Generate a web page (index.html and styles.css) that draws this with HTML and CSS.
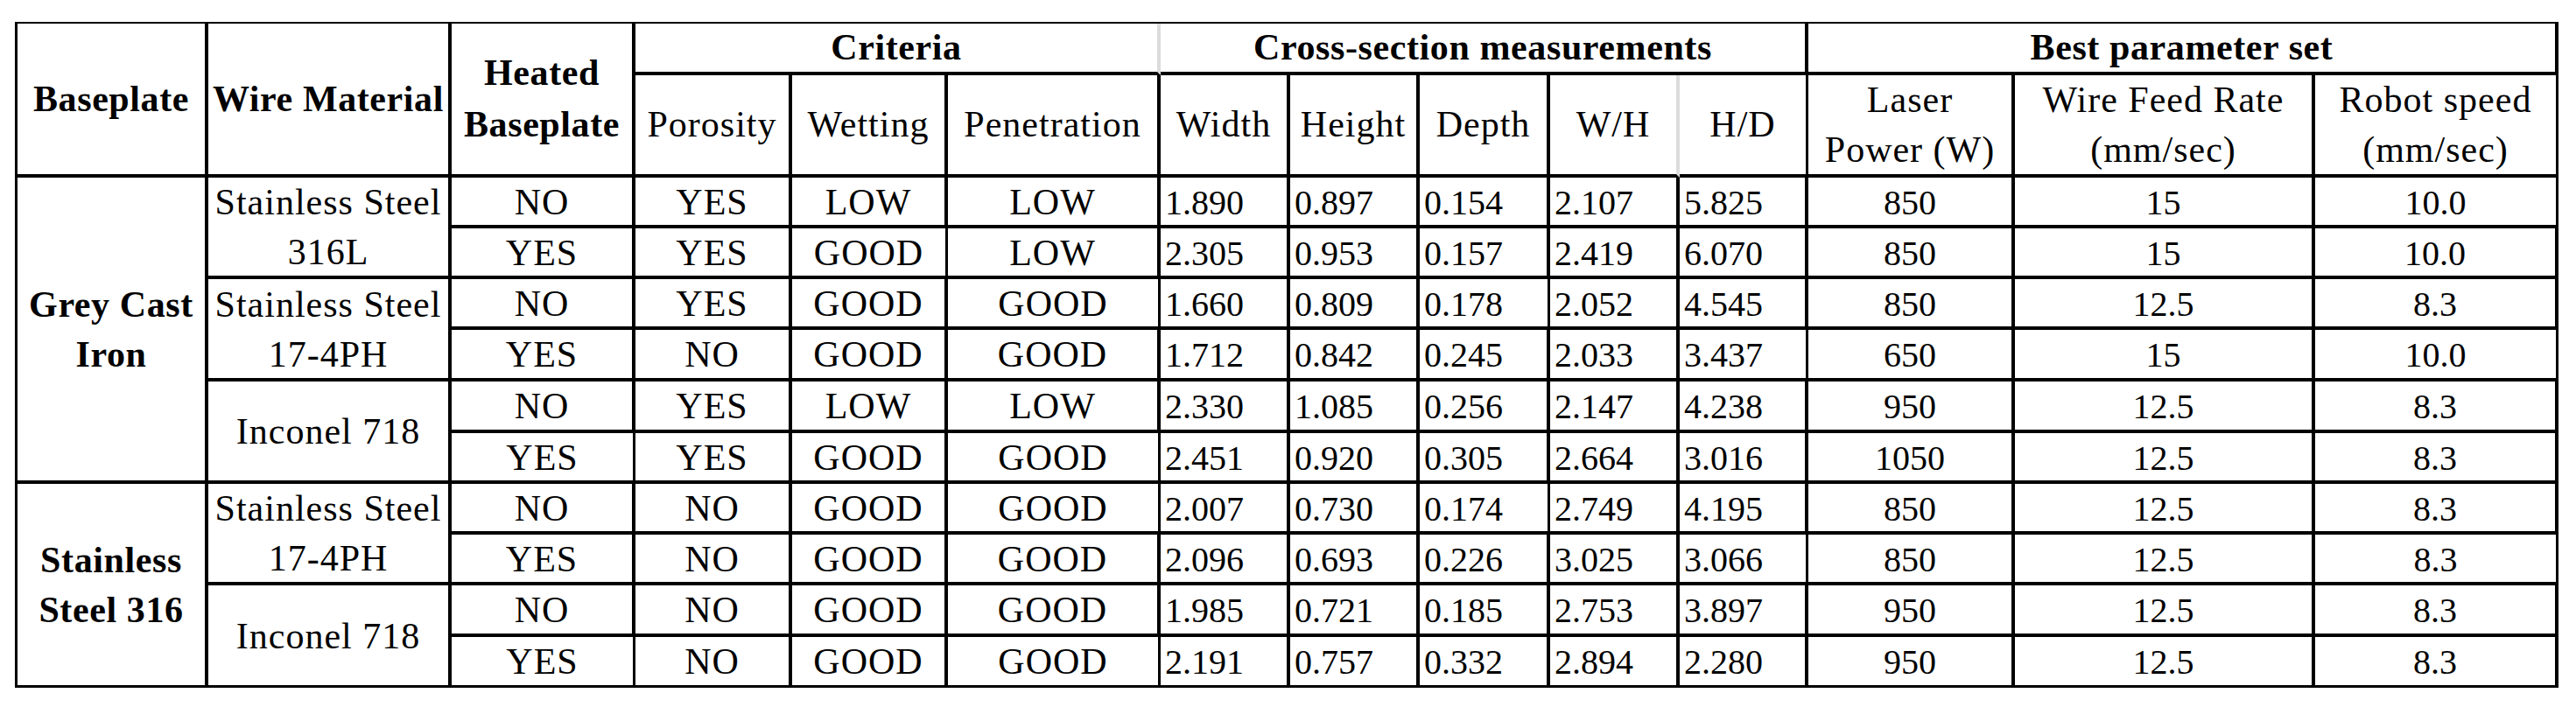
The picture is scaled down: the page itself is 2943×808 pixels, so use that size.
FILE: index.html
```html
<!DOCTYPE html>
<html lang="en">
<head>
<meta charset="utf-8">
<title>Best parameter set</title>
<link rel="stylesheet" href="styles.css">
</head>
<body>
<div class="table">
  <div class="c h b rs2">Baseplate</div>
  <div class="c h b rs2">Wire Material</div>
  <div class="c h b rs2 two">Heated<br>Baseplate</div>
  <div class="c h b cs3 faint">Criteria</div>
  <div class="c h b cs5">Cross-section measurements</div>
  <div class="c h b cs3">Best parameter set</div>
  <div class="c h">Porosity</div>
  <div class="c h">Wetting</div>
  <div class="c h">Penetration</div>
  <div class="c h">Width</div>
  <div class="c h">Height</div>
  <div class="c h">Depth</div>
  <div class="c h faint">W/H</div>
  <div class="c h">H/D</div>
  <div class="c h">Laser<br>Power (W)</div>
  <div class="c h">Wire Feed Rate<br>(mm/sec)</div>
  <div class="c h">Robot speed<br>(mm/sec)</div>

  <div class="c b rs6">Grey Cast<br>Iron</div>
  <div class="c rs2">Stainless Steel<br>316L</div>
  <div class="c">NO</div><div class="c">YES</div><div class="c">LOW</div><div class="c">LOW</div>
  <div class="c num">1.890</div><div class="c num">0.897</div><div class="c num">0.154</div><div class="c num">2.107</div><div class="c num">5.825</div>
  <div class="c nc">850</div><div class="c nc">15</div><div class="c nc">10.0</div>

  <div class="c">YES</div><div class="c">YES</div><div class="c">GOOD</div><div class="c">LOW</div>
  <div class="c num">2.305</div><div class="c num">0.953</div><div class="c num">0.157</div><div class="c num">2.419</div><div class="c num">6.070</div>
  <div class="c nc">850</div><div class="c nc">15</div><div class="c nc">10.0</div>

  <div class="c rs2">Stainless Steel<br>17-4PH</div>
  <div class="c">NO</div><div class="c">YES</div><div class="c">GOOD</div><div class="c">GOOD</div>
  <div class="c num">1.660</div><div class="c num">0.809</div><div class="c num">0.178</div><div class="c num">2.052</div><div class="c num">4.545</div>
  <div class="c nc">850</div><div class="c nc">12.5</div><div class="c nc">8.3</div>

  <div class="c">YES</div><div class="c">NO</div><div class="c">GOOD</div><div class="c">GOOD</div>
  <div class="c num">1.712</div><div class="c num">0.842</div><div class="c num">0.245</div><div class="c num">2.033</div><div class="c num">3.437</div>
  <div class="c nc">650</div><div class="c nc">15</div><div class="c nc">10.0</div>

  <div class="c rs2">Inconel 718</div>
  <div class="c">NO</div><div class="c">YES</div><div class="c">LOW</div><div class="c">LOW</div>
  <div class="c num">2.330</div><div class="c num">1.085</div><div class="c num">0.256</div><div class="c num">2.147</div><div class="c num">4.238</div>
  <div class="c nc">950</div><div class="c nc">12.5</div><div class="c nc">8.3</div>

  <div class="c">YES</div><div class="c">YES</div><div class="c">GOOD</div><div class="c">GOOD</div>
  <div class="c num">2.451</div><div class="c num">0.920</div><div class="c num">0.305</div><div class="c num">2.664</div><div class="c num">3.016</div>
  <div class="c nc">1050</div><div class="c nc">12.5</div><div class="c nc">8.3</div>

  <div class="c b rs4 last">Stainless<br>Steel 316</div>
  <div class="c rs2">Stainless Steel<br>17-4PH</div>
  <div class="c">NO</div><div class="c">NO</div><div class="c">GOOD</div><div class="c">GOOD</div>
  <div class="c num">2.007</div><div class="c num">0.730</div><div class="c num">0.174</div><div class="c num">2.749</div><div class="c num">4.195</div>
  <div class="c nc">850</div><div class="c nc">12.5</div><div class="c nc">8.3</div>

  <div class="c">YES</div><div class="c">NO</div><div class="c">GOOD</div><div class="c">GOOD</div>
  <div class="c num">2.096</div><div class="c num">0.693</div><div class="c num">0.226</div><div class="c num">3.025</div><div class="c num">3.066</div>
  <div class="c nc">850</div><div class="c nc">12.5</div><div class="c nc">8.3</div>

  <div class="c rs2 last">Inconel 718</div>
  <div class="c">NO</div><div class="c">NO</div><div class="c">GOOD</div><div class="c">GOOD</div>
  <div class="c num">1.985</div><div class="c num">0.721</div><div class="c num">0.185</div><div class="c num">2.753</div><div class="c num">3.897</div>
  <div class="c nc">950</div><div class="c nc">12.5</div><div class="c nc">8.3</div>

  <div class="c last">YES</div><div class="c last">NO</div><div class="c last">GOOD</div><div class="c last">GOOD</div>
  <div class="c num last">2.191</div><div class="c num last">0.757</div><div class="c num last">0.332</div><div class="c num last">2.894</div><div class="c num last">2.280</div>
  <div class="c nc last">950</div><div class="c nc last">12.5</div><div class="c nc last">8.3</div>
</div>
</body>
</html>
```
FILE: styles.css
```css
html, body {
  margin: 0;
  padding: 0;
  background: #ffffff;
}

body {
  font-family: "Liberation Serif", "Times New Roman", serif;
  color: #000000;
}

.table {
  display: grid;
  grid-template-columns: 218px 278px 210px 179px 178px 243px 148px 148px 149px 148px 147px 236px 343px 278px;
  grid-template-rows: 59px 117px 58px 58px 58px 59px 59px 58px 58px 58px 59px 58px;
  width: max-content;
  margin: 25px 0 0 17px;
  border-left: 3px solid #000;
  border-top: 2px solid #000;
  font-family: "Liberation Serif", "Times New Roman", serif;
}

.c {
  box-sizing: border-box;
  display: flex;
  align-items: center;
  justify-content: center;
  text-align: center;
  border-right: 4px solid #000;
  border-bottom: 4px solid #000;
  font-family: "Liberation Serif", "Times New Roman", serif;
  font-size: 42px;
  line-height: 57px;
  letter-spacing: 1px;
  padding-top: 2px;
  white-space: nowrap;
}

.c:nth-child(17n),
.c:nth-child(17n+14) {
  border-right-width: 3px;
}

.h {
  padding-top: 0;
}

.b {
  font-weight: bold;
  letter-spacing: 0.6px;
}

.two {
  line-height: 59px;
}

.rs2 { grid-row: span 2; }
.rs4 { grid-row: span 4; }
.rs6 { grid-row: span 6; }
.cs3 { grid-column: span 3; }
.cs5 { grid-column: span 5; }

.faint {
  border-right-color: #dcdcdc;
}

.num {
  justify-content: flex-start;
  padding-left: 5px;
  letter-spacing: 0;
  font-size: 40px;
}

.nc {
  letter-spacing: 0;
  font-size: 40px;
}

.last {
  border-bottom-width: 3px;
}
```
